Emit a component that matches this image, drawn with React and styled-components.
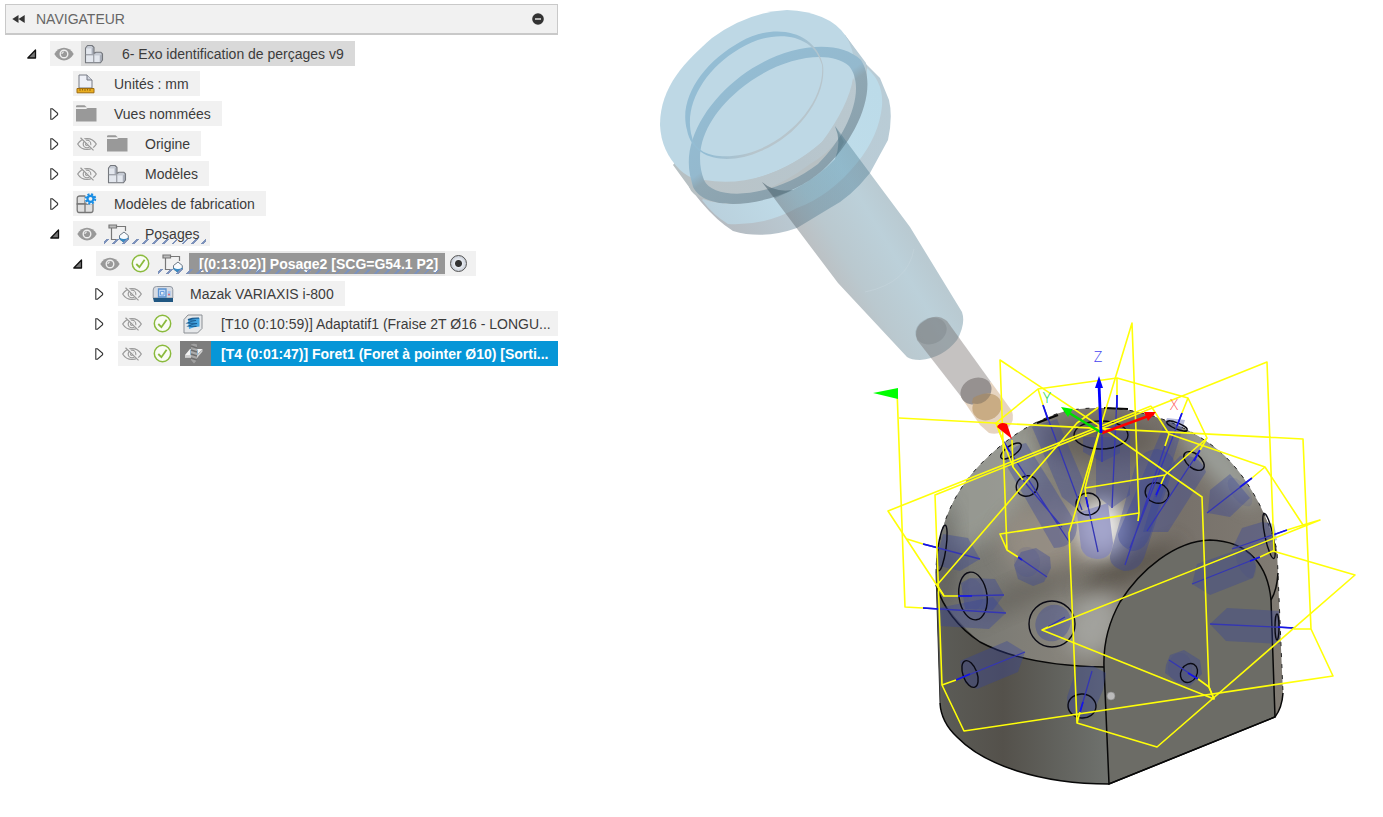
import React from "react";
import styled, { createGlobalStyle, css } from "styled-components";

const GlobalStyle = createGlobalStyle`
  * { box-sizing: border-box; }
  body {
    margin: 0;
    background: #fff;
    color: #3c3c3c;
    font-family: "Liberation Sans", Arial, sans-serif;
    font-size: 14px;
  }
  button { font: inherit; color: inherit; }
`;

const Page = styled.main`
  display: grid;
  grid-template-columns: 558px minmax(0, 1fr);
  min-height: 100vh;
`;

const Browser = styled.section`
  padding: 4px 0 0 5px;
`;

const Header = styled.header`
  display: flex;
  align-items: center;
  height: 31px;
  padding: 0 12px 0 4px;
  border: 1px solid #c9c9c9;
  border-bottom-width: 2px;
  background: #f1f1f1;
`;

const Title = styled.h1`
  flex: 1;
  margin: 0 0 0 10px;
  font-size: 14px;
  font-weight: 400;
  color: #666;
`;

const IconButton = styled.button`
  display: flex;
  align-items: center;
  justify-content: center;
  width: ${(p) => p.$width || 16}px;
  height: 25px;
  padding: 0;
  border: 0;
  background: none;
  flex: none;
`;

const Tree = styled.ul`
  display: flex;
  flex-direction: column;
  gap: 5px;
  margin: 0;
  padding: 6px 0 0;
  list-style: none;
`;

const indents = [21, 44, 67, 89];

const Row = styled.li`
  display: flex;
  height: 25px;
  padding-left: ${(p) => indents[p.$level]}px;
`;

const Bar = styled.div`
  display: flex;
  align-items: stretch;
  min-width: 0;
  background: #f1f1f1;
  ${(p) => p.$fill && css`flex: 1;`}
`;

const Toggle = styled(IconButton)`
  width: 24px;
  justify-content: flex-start;
  padding-left: 1px;
`;

const VisibilityButton = styled(IconButton)`
  width: 31px;
  padding-right: 4px;
`;

const Cell = styled.span`
  display: flex;
  align-items: center;
  justify-content: ${(p) => (p.$left ? "flex-start" : "center")};
  width: 31px;
  padding-left: ${(p) => (p.$left ? 3 : 0)}px;
  padding-right: ${(p) => (p.$left ? 0 : 4)}px;
  background: ${(p) => p.$bg || "transparent"};
`;

const Node = styled.span`
  position: relative;
  display: flex;
  min-width: 0;
  ${(p) => p.$fill && css`flex: 1;`}
  ${(p) =>
    p.$hatched &&
    css`
      &::after {
        content: "";
        position: absolute;
        left: 0;
        right: 4px;
        bottom: 2px;
        height: 5px;
        background: repeating-linear-gradient(135deg, transparent 0 2px, #7d92bb 2px 4px, transparent 4px 7px);
      }
    `}
`;

const tones = {
  plain: css``,
  root: css`background: #d9d9d9;`,
  setup: css`
    padding-right: 7px;
    background: #969696;
    color: #fff;
    font-weight: 700;
    border-top: 2px solid #e9e9e9;
    border-bottom: 2px solid #e9e9e9;
  `,
  active: css`background: #0696d7; color: #fff; font-weight: 700;`,
};

const Label = styled.span`
  display: flex;
  align-items: center;
  padding: 0 ${(p) => (p.$fill ? 4 : 11)}px 0 10px;
  white-space: nowrap;
  ${(p) => p.$fill && css`flex: 1;`}
  ${(p) => tones[p.$tone || "plain"]}
`;

const RadioLabel = styled.label`
  display: flex;
  align-items: center;
  width: 31px;
  padding-left: 5px;
`;

const Radio = styled.input`
  appearance: none;
  width: 17px;
  height: 17px;
  margin: 0;
  border: 1px solid #555;
  border-radius: 50%;
  background: radial-gradient(circle, #333 0 3px, #e8ecf2 4px, #c5cad3 8px);
`;

const Viewport = styled.section`
  min-width: 0;
  height: 100vh;
`;

const Scene = styled.svg`
  display: block;
  width: 100%;
  height: 100%;
`;

const AxisName = styled.text`
  font-family: "Open Sans", sans-serif;
  font-size: 15px;
  font-weight: 300;
  text-anchor: middle;
`;

/* ---------- icons ---------- */

const Closed = () => (
  <svg width="9" height="12" viewBox="0 0 9 12" aria-hidden="true">
    <path d="M.8 .8V11.2H2.4L7.6 6.7V5.3L2.4 .8Z" fill="#fff" stroke="#333" strokeWidth="1.1" />
  </svg>
);

const Open = () => (
  <svg width="10" height="10" viewBox="0 0 10 10" aria-hidden="true">
    <path d="M8.5 1V9H.8Z" fill="#777" stroke="#111" strokeWidth="1.3" strokeLinejoin="round" />
  </svg>
);

const Eye = () => (
  <svg width="20" height="14" viewBox="0 0 20 14" aria-hidden="true">
    <path d="M.3 7C5 -1.5 15 -1.5 19.7 7C15 15.5 5 15.5 .3 7Z" fill="#999" />
    <circle cx="10" cy="7" r="3.8" fill="#999" stroke="#eee" strokeWidth="1.4" />
    <path d="M8 7a2 2 0 0 1 2-2" fill="none" stroke="#e8e8e8" strokeWidth="1.2" />
  </svg>
);

const EyeOff = () => (
  <svg width="20" height="14" viewBox="0 0 20 14" fill="none" stroke="#999" strokeWidth="1.2" aria-hidden="true">
    <path d="M.7 7C5 -.3 15 -.3 19.3 7C15 14.3 5 14.3 .7 7Z" />
    <circle cx="10" cy="7" r="3.8" />
    <circle cx="10" cy="7" r="1.5" />
    <path d="M4.2 .3L17 13" stroke="#f1f1f1" strokeWidth="2.4" />
    <path d="M3.5 .8L16.5 13.4" />
  </svg>
);

const Check = () => (
  <svg width="19" height="19" viewBox="0 0 19 19" fill="none" stroke="#8aba3c" aria-hidden="true">
    <circle cx="9.5" cy="9.5" r="8.2" strokeWidth="1.5" fill="#fafcf6" />
    <path d="M5.3 10L8.4 13.2L13.6 5.7" strokeWidth="1.8" />
  </svg>
);

const Folder = () => (
  <svg width="21" height="17" viewBox="0 0 21 17" fill="#999" aria-hidden="true">
    <path d="M0 1.5Q0 .3 1.2 .3H8.5L10.8 2.3H0Z" />
    <path d="M0 4H10L11.5 3H20.5V16.5H0Z" />
  </svg>
);

const Component = () => (
  <svg width="20" height="20" viewBox="0 0 20 20" strokeLinejoin="round" aria-hidden="true">
    <path d="M1.5 4L3.5 1.5H8L10 3.5V9.5L12 8.3H17L18.5 9.8V16L16.5 18.8H1.5Z" fill="#c6cbd4" />
    <path d="M2 4.5H7.5V10H2ZM2 11.5H9V18H2ZM10.5 11.5H15.5V18H10.5Z" fill="#e3e7ee" />
    <path d="M7.8 4.5L9.8 3.5V10H7.8ZM16 11.5L18.2 9.8V16L16 18Z" fill="#a9aeb9" />
    <path d="M1.5 4L3.5 1.5H8L10 3.5V9.5L12 8.3H17L18.5 9.8V16L16.5 18.8H1.5Z" fill="none" stroke="#74777d" strokeWidth="1.1" />
    <path d="M1.5 10.7H9.7V18.8M9.7 10.7L10.5 9.5" fill="none" stroke="#8d9097" strokeWidth=".8" />
  </svg>
);

const Units = () => (
  <svg width="19" height="20" viewBox="0 0 18 20" aria-hidden="true">
    <path d="M2.5 14V1H10.5L15.5 6V14Z" fill="#eef0f7" stroke="#777b84" />
    <path d="M10.5 1V6H15.5" fill="#cfd3dd" stroke="#777b84" />
    <path d="M.5 14.5H17.5V18.8H.5Z" fill="#e9ae21" stroke="#a06d10" />
    <path d="M3.5 15v2M6 15v1.5M8.5 15v2M11 15v1.5M13.5 15v2" stroke="#84560a" strokeWidth=".8" />
  </svg>
);

const Manufacturing = () => (
  <svg width="21" height="21" viewBox="0 0 21 21" aria-hidden="true">
    <g fill="#dfdfdf" stroke="#777" strokeWidth="1.3">
      <path d="M1.2 11V5Q1.5 3 4 3H9V11Z" />
      <path d="M1.2 11H9V19.5H3Q1.2 19.5 1.2 17ZM9 11H17V17Q17 19.5 15 19.5H9Z" />
    </g>
    <circle cx="14.5" cy="5.8" r="6" fill="#f1f1f1" />
    <circle cx="14.5" cy="5.8" r="4.7" fill="none" stroke="#1b8ee4" strokeWidth="2" strokeDasharray="2 1.7" />
    <circle cx="14.5" cy="5.8" r="3" fill="#f1f1f1" stroke="#1b8ee4" strokeWidth="2.2" />
  </svg>
);

const Setup = () => (
  <svg width="22" height="22" viewBox="0 0 22 22" fill="none" aria-hidden="true">
    <path d="M2 2H9.5V5H2Z" fill="#bcbcbc" />
    <path d="M11 16.5H4.5V5M2 5V2H9.5V5H2ZM9.5 3.5H18.5V8" stroke="#777" strokeWidth="1.2" />
    <path d="M17 9L21.3 12.5V16L17 19.5L12.5 16V12.5Z" fill="#f8fbfe" stroke="#6b7785" />
    <path d="M12.5 14.5Q17 17.5 21.3 14.5V16.3L17 19.7L12.5 16.3Z" fill="#388ac4" />
  </svg>
);

const Machine = () => (
  <svg width="22" height="18" viewBox="0 0 22 18" aria-hidden="true">
    <path d="M1.2 13V5Q1.2 1.5 4.5 1.5H18Q20.8 1.5 20.8 4.5V13Z" fill="#d6dbe3" stroke="#9298a1" />
    <path d="M6.5 4H14V12H6.5Z" fill="#c3daf5" stroke="#5a91d0" strokeWidth="1.3" />
    <path d="M8.5 6.5H12V10H8.5Z" fill="#e2e9f2" stroke="#6a9fe0" />
    <path d="M15.8 6H18.5V11H15.8Z" fill="#9dbff0" />
    <path d="M16 8.8H18V10.3H16Z" fill="#e86e76" />
    <path d="M1 13H21V17H2Z" fill="#205782" />
  </svg>
);

const Adaptive = () => (
  <svg width="20" height="20" viewBox="0 0 20 20" aria-hidden="true">
    <path d="M1 5.5L5 1H19V14.5L14.5 19H1Z" fill="#e6e8ea" stroke="#8b8f94" />
    <path d="M5 5.5Q10 4 16.5 4V12.5Q11 12.5 6 15Z" fill="#45a6e2" />
    <path d="M16 4.2Q9 4 5 5.6L13 6.5Q8 7 4.5 9L14 9.5Q9 10 5.5 12L13.5 12.3" fill="none" stroke="#1b5c90" strokeWidth="1.2" />
  </svg>
);

const Drill = () => (
  <svg width="22" height="21" viewBox="0 0 22 21" aria-hidden="true">
    <path d="M7 6H19.5L14.5 11.5V14.5H2V12Z" fill="#f3f3f3" />
    <path d="M2 12H14.5L19.5 6V8.5L14.5 14.5H2Z" fill="#cfcfcf" />
    <path d="M8 1.5Q11 0 14 1.5V17L11 20.5L8 17Z" fill="#a4a4a4" fillOpacity=".9" />
    <path d="M8 3L14 5M8 7L14 9M8 11L14 13M8 15L14 17" stroke="#6e6e6e" strokeWidth="1.5" />
    <path d="M7.5 6.5V12M14.5 6.5V12" stroke="#94b6cf" />
  </svg>
);

const icons = {
  component: Component,
  units: Units,
  folder: Folder,
  manufacturing: Manufacturing,
  setup: Setup,
  machine: Machine,
  adaptive: Adaptive,
  drill: Drill,
};

/* ---------- tree ---------- */

const rows = [
  { level: 0, open: true, eye: "on", icon: "component", tone: "root", cellBg: "#d9d9d9", text: "6- Exo identification de perçages v9" },
  { level: 1, leaf: true, icon: "units", text: "Unités : mm" },
  { level: 1, icon: "folder", text: "Vues nommées" },
  { level: 1, eye: "off", icon: "folder", text: "Origine" },
  { level: 1, eye: "off", icon: "component", text: "Modèles" },
  { level: 1, icon: "manufacturing", text: "Modèles de fabrication" },
  { level: 1, open: true, eye: "on", icon: "setup", hatched: true, text: "Posages" },
  { level: 2, open: true, eye: "on", check: true, icon: "setup", hatched: true, tone: "setup", radio: true, text: "[(0:13:02)] Posage2 [SCG=G54.1 P2]" },
  { level: 3, eye: "off", icon: "machine", text: "Mazak VARIAXIS i-800" },
  { level: 3, eye: "off", check: true, icon: "adaptive", fill: true, text: "[T10 (0:10:59)] Adaptatif1 (Fraise 2T Ø16 - LONGU..." },
  { level: 3, eye: "off", check: true, icon: "drill", fill: true, tone: "active", cellBg: "#7d7d7d", text: "[T4 (0:01:47)] Foret1 (Foret à pointer Ø10) [Sorti..." },
];

function TreeRow({ row }) {
  const Icon = icons[row.icon];
  return (
    <Row $level={row.level}>
      <Toggle aria-label={row.open ? "Réduire" : "Développer"} disabled={row.leaf}>
        {!row.leaf && (row.open ? <Open /> : <Closed />)}
      </Toggle>
      <Bar $fill={row.fill}>
        {row.eye && (
          <VisibilityButton aria-label="Visibilité">
            {row.eye === "on" ? <Eye /> : <EyeOff />}
          </VisibilityButton>
        )}
        {row.check && <Cell><Check /></Cell>}
        <Node $hatched={row.hatched} $fill={row.fill}>
          <Cell $left $bg={row.cellBg}><Icon /></Cell>
          <Label $tone={row.tone} $fill={row.fill}>{row.text}</Label>
        </Node>
        {row.radio && (
          <RadioLabel aria-label="Posage actif">
            <Radio type="radio" name="posage" defaultChecked />
          </RadioLabel>
        )}
      </Bar>
    </Row>
  );
}

/* ---------- 3D view ---------- */

const domeEdge =
  "M936 573C937 530 952 500 967 480S1010 435 1037 422S1080 408 1103 408C1145 408 1190 427 1218 450S1268 515 1277 550";
const bodyPath = `${domeEdge}C1279 600 1281 650 1283 693Q1282 708 1275 717L1109 784C1040 784 984 765 957 737Q941 722 940 703Z`;
const facePath =
  "M1104 667C1103 640 1110 620 1120 602C1140 570 1175 541 1210 540C1250 541 1268 567 1271 600L1275 717L1109 784Z";

const bores = [
  "M1005 463Q1010 445 1026 443L1077 525Q1077 547 1054 548Z",
  "M1032 427L1057 419L1085 485L1078 510L1062 497Z",
  "M1083 437H1120V453L1102 462L1083 452Z",
  "M1096 425H1130V495L1112 508L1096 495Z",
  "M1135 467Q1140 450 1158 449Q1172 452 1175 463L1145 555Q1140 571 1124 571Q1109 566 1110 556Z",
  "M1167 418L1185 420L1150 535Q1145 551 1132 551Q1118 546 1118 534Z",
  "M1180 456Q1200 454 1206 472L1168 532H1143L1160 477Z",
  "M1014 565L1021 552L1036 548L1050 557L1051 568L1044 582L1033 586L1018 579Z",
  "M1210 490L1230 474L1250 498L1230 517L1208 513Z",
  "M1242 528L1262 522L1274 524L1277 540L1250 549L1232 549Z",
  "M1197 564L1243 548Q1256 555 1256 567L1253 578L1210 595L1192 584Z",
  "M1227 608L1279 611L1280 644L1226 641L1210 624Z",
  "M1166 665L1170 655L1184 650L1200 660L1202 674L1190 686L1177 682L1165 673Z",
  "M943 534L968 538L980 559L960 571L935 565Z",
  "M961 583L970 578L995 579L1004 595L993 610L965 609Z",
  "M938 608L993 597L1006 613L989 629L940 626Z",
  "M960 661L1007 641L1025 652L1018 672L977 689L965 683Z",
  "M1077 667L1093 666L1106 673L1103 690L1093 713L1083 720L1068 710L1067 697Z",
];

const rings = [
  [1101, 435, 27, 14, 0], [1011, 451, 12, 5, -35], [1027, 486, 11, 10, -30], [1088, 504, 12, 11, 0],
  [1157, 493, 12, 10, 20], [1194, 461, 12, 7, 40], [1177, 426, 11, 3, 22], [973, 596, 14, 24, -8],
  [1052, 624, 23, 23, 0], [970, 674, 7, 14, -20], [1082, 706, 14, 12, 5], [1189, 673, 8, 10, 30],
  [1277, 627, 2, 13, 0], [1269, 536, 4, 23, -12], [942, 548, 4, 23, 8],
];

const toolpath = [
  "M897 390L905 607L923 608", "M899 418L1303 439L1311 629H1294M1311 629L1333 676L964 731L942 685L935 495L1267 362L1274 551",
  "M942 685L956 680", "M1151 406L888 511L944 596H958M907 539L923 544", "M1099 407L1077 423L937 585L944 596",
  "M1018 557L1007 550L1000 360L1110 433L1202 497L1209 687L1214 699M1007 550L1000 534L1139 513L1138 521",
  "M1139 513L1132 323L1098 435L1069 533L1077 723L1157 747L1355 575L1273 551L1260 557M1077 723L1080 712",
  "M1003 441L996 423L1038 389L1117 378L1188 398L1207 438L1165 475L1085 488L1086 497M1099 433L1085 488",
  "M996 423L1013 467M1012 440L1013 467L1023 480M1038 389L1043 405M1117 378V395M1188 398L1182 413M1207 438L1200 450",
  "M1151 406L1169 434L1165 446M1169 434L1265 467L1252 478M1265 467L1303 525L1287 530M1303 525L1320 520L1042 630L1214 699L1209 687L1198 679M1042 630L1048 627M1165 475L1161 484",
];

const boreAxes =
  "M923 608L1006 613M1294 628L1210 624M956 680L1025 652M958 596L1004 595M923 544L980 559M1018 557L1047 577M1260 557L1192 584M1080 712L1092 671M1003 441L1070 543M1023 480L1062 527M1043 405L1082 510M1117 395L1112 508M1182 413L1130 548M1165 446L1125 565M1200 450L1147 531M1252 478L1207 513M1287 530L1232 549M1046 628L1065 617M1198 679L1169 660M1161 484L1156 497M1086 497L1098 552M1102 435V462";
const axisStarts =
  "M923 608L939 609M1294 628L1278 627M956 680L970 674M958 596L972 596M923 544L939 548M1018 557L1022 560M1260 557L1250 561M1080 712L1083 702M1003 441L1010 452M1043 405L1048 420M1117 395V408M1182 413L1177 426M1200 450L1194 461M1252 478L1240 487M1287 530L1273 535M1198 679L1188 673M1161 484L1156 495M1086 497L1088 507";

function Holder() {
  return (
    <g>
      <path d="M862 60L880 78L889 100Q893 117 888 140L870 173Q850 198 830 208L797 228Q763 240 733 231Q717 221 701 202L689 187L845 50Z" fill="url(#rim)" />
      <path d="M863 65Q884 80 882 106Q879 136 857 163Q830 196 797 208Q765 226 728 224Q713 215 702 200L850 60Z" fill="url(#flange)" />
      <path d="M673 165L689 187Q695 203 735 204Q775 200 800 180Q850 150 866 95L867 66Q860 56 845 35L790 15Z" fill="#b7c0c3" />
      <path d="M845 35L866 63Q870 90 856 115L852 60Z" fill="#b6cbd6" />
      <path d="M660 125C660 86 686 61 712 38Q748 12 787 10Q829 12 845 35Q854 48 855 69C854 95 838 123 822 142Q784 177 723 185Q694 183 680 170Q661 151 660 125Z" fill="#bed8e5" />
      <path d="M853 78Q862 95 848 123Q835 150 810 164Q764 199 723 195Q704 189 704 180Q766 190 822 142Q849 105 853 78Z" fill="url(#side)" />
      <path fillRule="evenodd" fill="url(#ring)" d="M690 175C683 140 707 102 741 76C782 45 837 37 861 60C879 88 857 139 823 170C783 206 707 216 693 187ZM704 180C693 151 705 119 739 90C777 58 828 48 849 66C867 88 848 135 818 164C774 198 714 202 704 180Z" />
      <path fillRule="evenodd" fill="url(#smallRing)" d="M687 130C678 98 704 62 740 42C775 22 815 31 823 65C827 97 798 136 761 151C731 165 693 162 687 130ZM692 137C683 106 704 70 739 49C775 27 814 34 822 65C825 97 797 133 760 149C732 161 696 159 692 137Z" />
      <path d="M762 182Q774 193 793 190Q818 177 835 159Q842 142 835 126L875 180L910 227L962 312Q966 324 957 340Q943 358 920 360Q911 360 907 357L838 283L798 230Z" fill="url(#shaft)" />
      <path d="M762 182Q774 193 793 190L775 198Z" fill="#587784" opacity=".45" />
      <path d="M835 126Q842 142 835 159L844 142Z" fill="#587784" opacity=".35" />
      <path d="M914 249Q908 283 865 292" fill="none" stroke="#c9d9df" strokeWidth=".7" opacity=".6" />
      <ellipse cx="931" cy="331" rx="16" ry="13" transform="rotate(-22 931 331)" fill="#596d77" opacity=".22" />
      <path d="M917 340Q914 330 920 324Q935 311 947 321L991 382L966 403Z" fill="#665f5c" opacity=".38" />
      <path d="M961 397L991 382L1012 411Q1015 420 1009 427Q1000 436 989 433L980 425Z" fill="#e5d2bd" opacity=".95" />
      <ellipse cx="976" cy="391" rx="16" ry="13" transform="rotate(-25 976 391)" fill="#969190" />
      <ellipse cx="987" cy="407" rx="15" ry="13" transform="rotate(-25 987 407)" fill="#c9ac84" />
      <path d="M972 403Q984 407 991 394Q983 392 973 398Z" fill="#a18c71" />
    </g>
  );
}

function Part() {
  return (
    <g>
      <clipPath id="bodyClip"><path d={bodyPath} /></clipPath>
      <path d={bodyPath} fill="url(#dome)" />
      <g clipPath="url(#bodyClip)">
        <ellipse cx="985" cy="485" rx="42" ry="76" transform="rotate(38 985 485)" fill="#a3a69e" opacity=".7" filter="url(#soft)" />
        <ellipse cx="1218" cy="460" rx="16" ry="58" transform="rotate(-42 1218 460)" fill="#a4aaa5" opacity=".8" filter="url(#soft)" />
        <ellipse cx="1100" cy="440" rx="60" ry="24" fill="#5e5952" opacity=".7" filter="url(#soft)" />
        <ellipse cx="1050" cy="540" rx="50" ry="36" fill="#a1968a" opacity=".6" filter="url(#soft)" />
        <ellipse cx="945" cy="560" rx="12" ry="60" fill="#4d4c49" opacity=".5" filter="url(#soft)" />
        <ellipse cx="1130" cy="568" rx="55" ry="12" transform="rotate(-24 1130 568)" fill="#514c43" opacity=".8" filter="url(#soft)" />
        <ellipse cx="1030" cy="590" rx="60" ry="13" transform="rotate(-24 1030 590)" fill="#5e5b55" opacity=".6" filter="url(#soft)" />
        <ellipse cx="1094" cy="625" rx="26" ry="34" transform="rotate(25 1094 625)" fill="#b4b6b2" opacity=".65" filter="url(#soft)" />
        <ellipse cx="1102" cy="527" rx="24" ry="28" fill="#fff" opacity=".85" filter="url(#soft)" />
        <path d="M930 580Q947 613 980 642Q1025 666 1104 667H1112V800H930Z" fill="url(#wall)" />
      </g>
      <path d={facePath} fill="#6c6c66" stroke="#080808" strokeWidth="1.5" />
      <path d="M940 703Q941 722 957 737C984 765 1040 784 1109 784L1275 717Q1282 708 1283 693M936 585Q947 620 980 642Q1025 666 1104 667M1278 573Q1277 590 1271 600" fill="none" stroke="#080808" strokeWidth="1.5" />
      <path d="M936 573L940 703" stroke="#333" strokeWidth="1" />
      <path d={`${domeEdge}L1283 693`} fill="none" stroke="#222" strokeWidth="1" strokeDasharray="4 7" />
      <path d="M1037 423L1058 415M1104 408L1128 409" stroke="#080808" strokeWidth="2" />
      <g fill="#34429b" fillOpacity=".36">
        {bores.map((d) => <path key={d} d={d} />)}
        <ellipse cx="1053" cy="623" rx="17" ry="19" transform="rotate(35 1053 623)" />
        <ellipse cx="1027" cy="562" rx="13" ry="15" opacity=".35" />
        <ellipse cx="972" cy="595" rx="11" ry="16" opacity=".35" />
        <ellipse cx="1180" cy="668" rx="12" ry="15" opacity=".35" />
        <ellipse cx="1240" cy="492" rx="8" ry="17" transform="rotate(-38 1240 492)" opacity=".35" />
        <ellipse cx="1246" cy="563" rx="8" ry="16" transform="rotate(-25 1246 563)" opacity=".35" />
      </g>
      <path d="M1077 513L1108 503L1113 543Q1112 559 1097 559Q1084 558 1081 548Z" fill="#7c80bb" fillOpacity=".65" />
      <g fill="none" stroke="#0a0a14" strokeWidth="1.4">
        {rings.map(([cx, cy, rx, ry, a]) => (
          <ellipse key={`${cx}-${cy}`} cx={cx} cy={cy} rx={rx} ry={ry} transform={`rotate(${a} ${cx} ${cy})`} />
        ))}
      </g>
      <circle cx="1111" cy="696" r="4" fill="#bbb" stroke="#888" strokeWidth=".6" />
    </g>
  );
}

function View3D() {
  return (
    <Scene viewBox="558 0 825 817" role="img" aria-label="Vue 3D du perçage">
      <defs>
        <filter id="soft" x="-50%" y="-50%" width="200%" height="200%"><feGaussianBlur stdDeviation="10" /></filter>
        <linearGradient id="dome"><stop stopColor="#747570" /><stop offset=".35" stopColor="#85827a" /><stop offset=".7" stopColor="#77716a" /><stop offset="1" stopColor="#807b73" /></linearGradient>
        <linearGradient id="wall"><stop stopColor="#6b6c67" /><stop offset=".08" stopColor="#5b5b56" /><stop offset=".4" stopColor="#54514b" /><stop offset=".65" stopColor="#5f5f5a" /><stop offset="1" stopColor="#70736f" /></linearGradient>
        <linearGradient id="ring" gradientUnits="userSpaceOnUse" x1="716" y1="44" x2="830" y2="212"><stop offset=".1" stopColor="#94bdd4" /><stop offset=".48" stopColor="#94b9ce" /><stop offset=".53" stopColor="#8fa7b3" /><stop offset="1" stopColor="#869ca8" /></linearGradient>
        <linearGradient id="smallRing" gradientUnits="userSpaceOnUse" x1="700" y1="60" x2="800" y2="130"><stop offset=".5" stopColor="#94bdd4" /><stop offset=".8" stopColor="#b7c5cc" /></linearGradient>
        <linearGradient id="rim" gradientUnits="userSpaceOnUse" x1="700" y1="220" x2="890" y2="100"><stop stopColor="#b4b8bd" /><stop offset=".4" stopColor="#bacbd5" /><stop offset="1" stopColor="#b9ccd6" /></linearGradient>
        <linearGradient id="flange" gradientUnits="userSpaceOnUse" x1="700" y1="210" x2="880" y2="90"><stop stopColor="#b9cfdb" /><stop offset=".4" stopColor="#c0ddea" /><stop offset="1" stopColor="#bcdbe9" /></linearGradient>
        <linearGradient id="side" gradientUnits="userSpaceOnUse" x1="705" y1="190" x2="855" y2="80"><stop stopColor="#bac4c8" /><stop offset=".5" stopColor="#b7c5cc" /><stop offset="1" stopColor="#bac8cf" /></linearGradient>
        <linearGradient id="shaft" gradientUnits="userSpaceOnUse" x1="810" y1="255" x2="892" y2="205"><stop stopColor="#4e555b" stopOpacity=".38" /><stop offset=".3" stopColor="#446b7c" stopOpacity=".37" /><stop offset=".75" stopColor="#397590" stopOpacity=".34" /><stop offset="1" stopColor="#3d6c81" stopOpacity=".36" /></linearGradient>
      </defs>
      <Holder />
      <Part />
      <path d={boreAxes} fill="none" stroke="#3436b4" strokeWidth="1.3" />
      <path d={axisStarts} fill="none" stroke="#1514e8" strokeWidth="1.7" />
      <g fill="none" stroke="#ffff08" strokeWidth="1.6" strokeLinejoin="round">
        {toolpath.map((d) => <path key={d} d={d} />)}
      </g>
      <path d="M873 393L898 388V399Z" fill="#0f0" />
      <path d="M997 427Q1000 421 1007 424L1012 439Z" fill="#f00" />
      <path d="M1102 433L1154 414" stroke="#f00" strokeWidth="2.5" /><path d="M1156 412L1148 421L1144 412Z" fill="#f00" />
      <path d="M1102 433L1066 411" stroke="#0d0" strokeWidth="2.5" /><path d="M1061 407L1073 409L1068 417Z" fill="#0e0" />
      <path d="M1101 433L1099 384" stroke="#00f" strokeWidth="2.8" /><path d="M1099 376L1103 388H1095Z" fill="#00f" />
      <AxisName x="1098" y="362" fill="#4545ef">Z</AxisName>
      <AxisName x="1047" y="403" fill="#20d840">Y</AxisName>
      <AxisName x="1174" y="410" fill="#ff5c5c">X</AxisName>
    </Scene>
  );
}

export default function App() {
  return (
    <>
      <GlobalStyle />
      <Page>
        <Browser>
          <Header>
            <IconButton aria-label="Réduire le navigateur">
              <svg width="13" height="10" viewBox="0 0 13 10" fill="#333"><path d="M6.5 1V9L.3 5ZM12.7 1V9L6.5 5Z" /></svg>
            </IconButton>
            <Title>NAVIGATEUR</Title>
            <IconButton $width={14} aria-label="Masquer">
              <svg width="12" height="12" viewBox="0 0 12 12"><circle cx="6" cy="6" r="5.8" fill="#333" /><path d="M3 6H9" stroke="#eee" strokeWidth="1.4" /></svg>
            </IconButton>
          </Header>
          <Tree>
            {rows.map((row) => <TreeRow key={row.text} row={row} />)}
          </Tree>
        </Browser>
        <Viewport><View3D /></Viewport>
      </Page>
    </>
  );
}
